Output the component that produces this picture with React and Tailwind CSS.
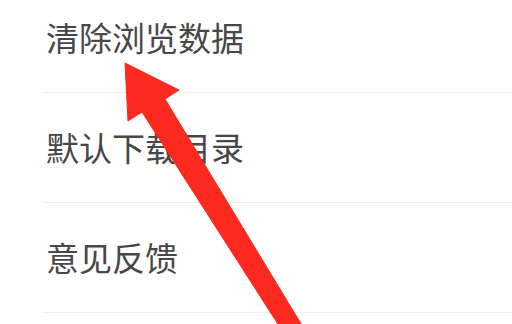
const items = ["清除浏览数据", "默认下载目录", "意见反馈"];

function Arrow() {
  return (
    <svg
      className="absolute inset-0 pointer-events-none"
      width="512"
      height="324"
      viewBox="0 0 512 324"
    >
      <polygon
        points="125,63 179,90 165,99 306,332 283,332 142,112 128,121"
        fill="#fc2a1e"
        stroke="#fc2a1e"
        strokeWidth="1"
        strokeLinejoin="round"
      />
    </svg>
  );
}

export default function App() {
  return (
    <div className="relative w-[512px] h-[324px] overflow-hidden bg-white">
      <div className="-mt-[17px] pl-[42px] flex flex-col">
        {items.map((label) => (
          <div
            key={label}
            className="h-[110px] flex items-center border-b-[1.5px] border-[#efefef]"
          >
            <span
              className="pl-[4px] text-[33px] leading-none text-[#474747]"
              style={{ fontFamily: '"Noto Sans CJK SC", "Noto Sans", sans-serif' }}
            >
              {label}
            </span>
          </div>
        ))}
      </div>
      <Arrow />
    </div>
  );
}
